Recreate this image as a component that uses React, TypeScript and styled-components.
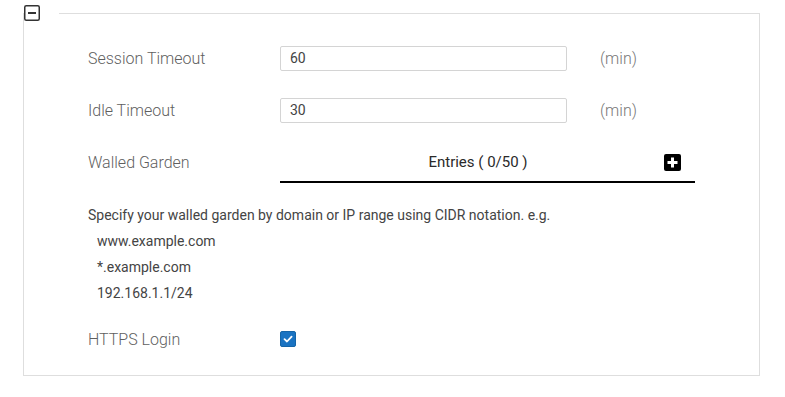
import React from 'react';
import styled, { createGlobalStyle } from 'styled-components';

const GlobalStyle = createGlobalStyle`
  html, body {
    margin: 0;
    padding: 0;
    background: #ffffff;
  }
  body {
    font-family: Roboto, 'Liberation Sans', Arial, sans-serif;
  }
`;

type Field = {
  label: string;
  value: string;
  unit: string;
};

const timeouts: Field[] = [
  { label: 'Session Timeout', value: '60', unit: '(min)' },
  { label: 'Idle Timeout', value: '30', unit: '(min)' },
];

const examples = ['www.example.com', '*.example.com', '192.168.1.1/24'];

const MinusIcon = () => (
  <svg width="16" height="16" viewBox="0 0 16 16">
    <rect x="0.75" y="0.75" width="14.5" height="14.5" rx="1.5" fill="none" stroke="#333" strokeWidth="1.5" />
    <rect x="4" y="7" width="8" height="2" fill="#333" />
  </svg>
);

const PlusIcon = () => (
  <svg width="17" height="17" viewBox="0 0 17 17">
    <rect x="0" y="0" width="17" height="17" rx="2" fill="#000" />
    <rect x="7" y="3.5" width="3" height="10" fill="#fff" />
    <rect x="3.5" y="7" width="10" height="3" fill="#fff" />
  </svg>
);

const CheckIcon = () => (
  <svg width="10" height="10" viewBox="0 0 10 10">
    <path d="M1.5 5.2 L4 7.5 L8.6 2.6" fill="none" stroke="#fff" strokeWidth="1.8" strokeLinecap="round" strokeLinejoin="round" />
  </svg>
);

const App: React.FC = () => {
  return (
    <>
      <GlobalStyle />
      <Panel>
        <Legend>
          <MinusIcon />
        </Legend>
        <Body>
          {timeouts.map((f) => (
            <Row key={f.label}>
              <Label>{f.label}</Label>
              <TextInput defaultValue={f.value} />
              <Unit>{f.unit}</Unit>
            </Row>
          ))}
          <Row>
            <Label>Walled Garden</Label>
            <EntriesHeader>
              <EntriesTitle>Entries ( 0/50 )</EntriesTitle>
              <AddButton>
                <PlusIcon />
              </AddButton>
            </EntriesHeader>
          </Row>
          <Help>
            <HelpLine>
              Specify your walled garden by domain or IP range using CIDR notation. e.g.
            </HelpLine>
            {examples.map((e) => (
              <HelpLine key={e} indent>
                {e}
              </HelpLine>
            ))}
          </Help>
          <Row last>
            <Label>HTTPS Login</Label>
            <CheckBox>
              <CheckIcon />
            </CheckBox>
          </Row>
        </Body>
      </Panel>
    </>
  );
};

const Panel = styled.fieldset`
  box-sizing: border-box;
  width: 737px;
  margin: 5px 0 0 23px;
  padding: 0;
  border: 1px solid #dedede;
  min-width: 0;
`;

const Legend = styled.legend`
  display: flex;
  padding: 0 19px 0 0;
  margin: 0;
  height: 16px;
`;

const Body = styled.div`
  padding: 11px 0 0 64px;
`;

const Row = styled.div<{ last?: boolean }>`
  display: flex;
  align-items: center;
  height: 52px;
  margin-bottom: ${(p) => (p.last ? '10px' : '0')};
`;

const Label = styled.div`
  width: 192px;
  flex-shrink: 0;
  font-size: 16px;
  font-weight: 300;
  color: #5f5f5f;
`;

const TextInput = styled.input`
  box-sizing: border-box;
  width: 287px;
  height: 25px;
  padding: 0 9px;
  border: 1px solid #d4d4d4;
  border-radius: 2px;
  font-family: Roboto, 'Liberation Sans', Arial, sans-serif;
  font-size: 14px;
  color: #444;
  outline: none;
`;

const Unit = styled.span`
  margin-left: 33px;
  font-size: 16px;
  font-weight: 300;
  color: #777;
`;

const EntriesHeader = styled.div`
  box-sizing: border-box;
  display: flex;
  align-items: center;
  width: 415px;
  height: 40px;
  margin-top: 2px;
  border-bottom: 2px solid #000;
`;

const EntriesTitle = styled.div`
  flex: 1;
  padding-left: 12px;
  text-align: center;
  font-size: 15px;
  color: #2a2a2a;
`;

const AddButton = styled.div`
  display: flex;
  margin-right: 14px;
`;

const Help = styled.div`
  margin-top: 14px;
  margin-bottom: 7px;
`;

const HelpLine = styled.div<{ indent?: boolean }>`
  line-height: 26px;
  font-size: 14px;
  color: #444;
  padding-left: ${(p) => (p.indent ? '9px' : '0')};
`;

const CheckBox = styled.span`
  display: flex;
  align-items: center;
  justify-content: center;
  width: 16px;
  height: 16px;
  box-sizing: border-box;
  border-radius: 2px;
  background: #1a73c2;
  border: 1px solid #1565a8;
`;

export default App;
